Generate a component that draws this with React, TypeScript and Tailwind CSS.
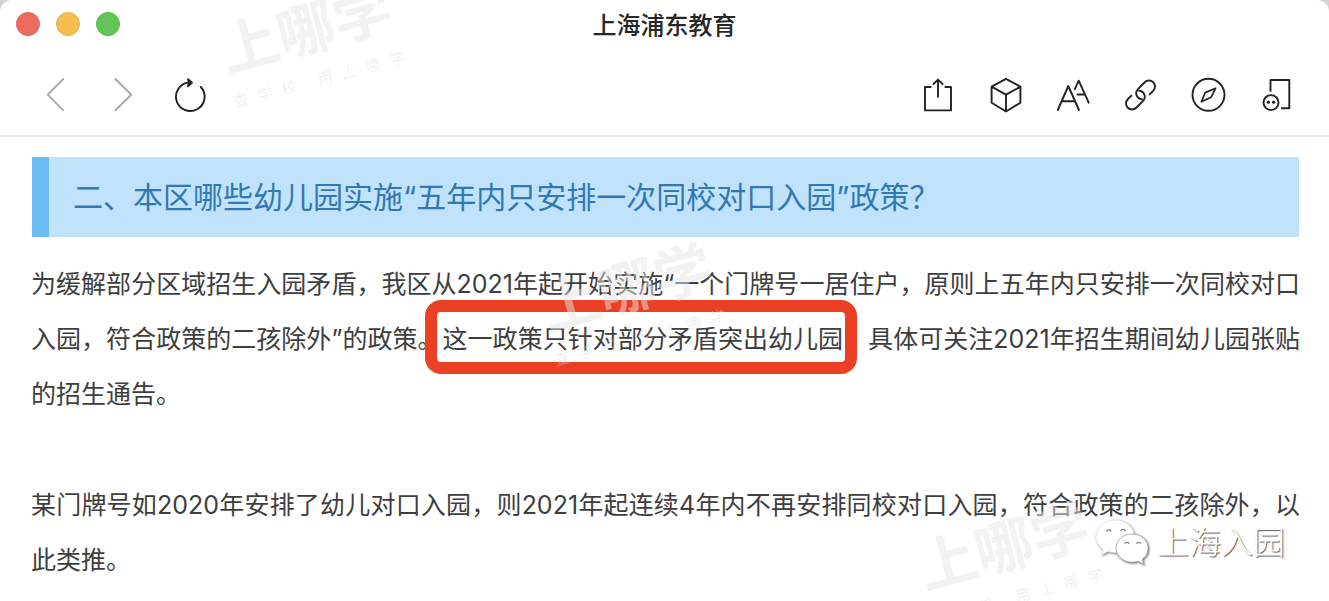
import type { ReactNode } from 'react';

const ToolButton = ({ label, muted, children }: { label: string; muted?: boolean; children: ReactNode }) => (
  <button type="button" aria-label={label} className={muted ? 'text-[#a9a9a9]' : 'text-[#222222]'}>
    <svg
      viewBox="0 0 36 36"
      className="block size-9"
      fill="none"
      stroke="currentColor"
      strokeWidth="1.9"
      strokeLinecap="round"
      strokeLinejoin="round"
    >
      {children}
    </svg>
  </button>
);

const TitleBar = () => (
  <div className="grid h-13 grid-cols-[1fr_auto_1fr] items-center px-4">
    <div className="flex gap-4 pb-1">
      <button type="button" aria-label="关闭" className="size-6 rounded-full border border-[#e0615a] bg-[#ed6a5f]" />
      <button type="button" aria-label="最小化" className="size-6 rounded-full border border-[#e2b04b] bg-[#f6be50]" />
      <button type="button" aria-label="缩放" className="size-6 rounded-full border border-[#57b84a] bg-[#61c454]" />
    </div>
    <h1 className="text-2xl font-medium text-[#262626]">上海浦东教育</h1>
  </div>
);

const Toolbar = () => (
  <div className="flex h-[83px] items-center justify-between pt-0.5 pr-[34px] pl-[38px]">
    <div className="flex gap-[31px]">
      <ToolButton label="后退" muted>
        <path d="M25.3 2 9.7 17.7l15.6 15.6" />
      </ToolButton>
      <ToolButton label="前进" muted>
        <path d="M10.3 2l16 15.7-16 15.6" />
      </ToolButton>
      <ToolButton label="刷新">
        <path d="M28.8 10A14.3 14.3 0 1 1 18 5.4" />
        <path d="M16 2.2 20 5.6l-4 3.8 1-3.8z" fill="currentColor" />
      </ToolButton>
    </div>
    <div className="flex gap-8">
      <ToolButton label="分享">
        <path d="M12.4 10H6v23.4h26V10h-6.4" strokeLinecap="butt" strokeLinejoin="round" />
        <path d="M19 19.7V2.8M14.4 7.2 19 2.6l4.6 4.6" />
      </ToolButton>
      <ToolButton label="小程序">
        <path d="M19 1.8 33.4 9.7v16L19 34.5 4.6 25.7v-16zM4.6 9.700 19 17.700l14.400-8M19 17.700v16.800" />
      </ToolButton>
      <ToolButton label="字体大小">
        <path d="M2.8 33 13.3 9 24 33M6.8 24.2h13" />
        <path d="M19.7 12.3l4-8.6 10 22M22.5 17.5H30" />
      </ToolButton>
      <ToolButton label="复制链接">
        <g transform="translate(17.500 18) rotate(-45)">
          <path d="M6.9 6H12A6 6 0 0 0 12-6H2.4A6 6 0 0 0-2 4" />
          <path d="M6.9 6H12A6 6 0 0 0 12-6H2.4A6 6 0 0 0-2 4" transform="rotate(180)" />
        </g>
      </ToolButton>
      <ToolButton label="用浏览器打开">
        <circle cx="17.5" cy="17.8" r="16" />
        <path d="M24.6 11.200 14.200 15.600 10.400 24.800l9.800-4.600z" strokeWidth="1.7" />
      </ToolButton>
      <ToolButton label="发送到手机">
        <path d="M11.5 14.8V3h18.800v28.300h-8.200" strokeLinecap="butt" />
        <circle cx="12" cy="25.6" r="7.5" />
        <circle cx="9.4" cy="25.2" r="1.6" fill="currentColor" stroke="none" />
        <circle cx="14.6" cy="25.2" r="1.6" fill="currentColor" stroke="none" />
      </ToolButton>
    </div>
  </div>
);

const Watermark = ({ className }: { className: string }) => (
  <div
    aria-hidden="true"
    className={`pointer-events-none absolute flex w-[174px] -rotate-15 flex-col items-center whitespace-nowrap text-[#e6e6e6]/50 ${className}`}
  >
    <span className="text-[58px] leading-16 font-bold">上哪学</span>
    <span className="flex gap-[10px] text-[15px] leading-10 font-light text-[#d8d8d8]/50">
      <span>查</span>
      <span>学</span>
      <span>校</span>
      <span className="pl-3">用</span>
      <span>上</span>
      <span>哪</span>
      <span>学</span>
    </span>
  </div>
);

const AccountMark = () => (
  <div className="pointer-events-none absolute right-11 bottom-[31px] flex items-center gap-1">
    <svg viewBox="0 0 60 54" className="h-[54px] w-[60px] drop-shadow-[1px_1px_1px_#777777]" fill="#ffffff">
      <path
        d="M22 4C11 4 3 11.4 3 20.6c0 5.400 2.800 9.900 7.300 12.900L8.200 39l7-3.400c2.200.7 4.400 1.100 6.800 1.100 11 0 19.400-7 19.400-16.100S33 4 22 4z"
        stroke="#dddddd"
        strokeWidth=".5"
      />
      <path
        d="M39 18c-9.300 0-16 6.200-16 14s6.700 14.200 16 14.200c2.200 0 4.200-.3 6.100-1l5.700 3.400-1.600-5.500C53.200 40.600 55 36.600 55 32c0-7.800-6.700-14-16-14z"
        stroke="#999999"
        strokeWidth=".8"
      />
      <g fill="none" stroke="#777777" strokeWidth="1.2">
        <path d="M13.400 15.500a2.400 2.400 0 0 1 4.600 0M27.700 15a2.400 2.400 0 0 1 4.600 0" />
        <path d="M32 27.700a2.100 2.100 0 0 1 4 0M43.600 27.700a2.100 2.100 0 0 1 4 0" />
      </g>
    </svg>
    <span className="text-[32px] leading-10 font-light text-white [text-shadow:1px_1px_1px_#555555]">上海入园</span>
  </div>
);

const App = () => {
  return (
    <div className="bg-[#d4d4d4] font-[Inter,'Noto_Sans_CJK_SC',sans-serif]" lang="zh-CN">
      <div className="relative min-h-screen overflow-hidden rounded-t-xl bg-white">
        <header className="border-b-2 border-[#ebebeb]">
          <TitleBar />
          <Toolbar />
        </header>

        <main className="pt-5 pr-[30px] pl-8">
          <h2 className="border-l-[17px] border-[#6cbbf5] bg-[#c0e3fb] pl-6 text-[30px] leading-20 text-[#3278b3]">
            二、本区哪些幼儿园实施“五年内只安排一次同校对口入园”政策？
          </h2>
          <div className="-mx-px text-justify text-[25px] leading-[55px] text-[#3e3e3e]">
            <p className="mt-5">
              为缓解部分区域招生入园矛盾，我区从2021年起开始实施“一个门牌号一居住户，原则上五年内只安排一次同校对口入园，符合政策的二孩除外”的政策。
              <mark className="relative bg-transparent text-inherit">
                这一政策只针对部分矛盾突出幼儿园
                <span className="absolute -top-6 -right-3.5 -bottom-5 -left-4.5 rounded-2xl border-12 border-[#ec4025]" />
              </mark>
              ，具体可关注2021年招生期间幼儿园张贴的招生通告。
            </p>
            <p className="mt-14">
              某门牌号如2020年安排了幼儿对口入园，则2021年起连续4年内不再安排同校对口入园，符合政策的二孩除外，以此类推。
            </p>
          </div>
        </main>

        <Watermark className="top-[-3px] left-[224px]" />
        <Watermark className="top-[255px] left-[545px]" />
        <Watermark className="top-[514px] left-[922px]" />
        <AccountMark />
      </div>
    </div>
  );
};

export default App;
